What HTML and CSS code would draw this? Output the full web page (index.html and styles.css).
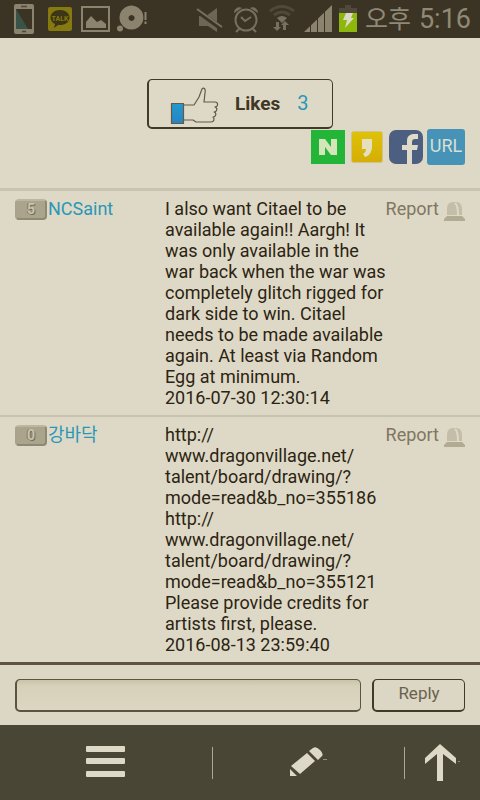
FILE: index.html
```html
<!DOCTYPE html>
<html lang="en">
<head>
<meta charset="utf-8">
<meta name="viewport" content="width=device-width, initial-scale=1">
<title>Comments</title>
<link rel="stylesheet" href="styles.css">
</head>
<body>
<header class="status">
  <svg class="status-icons" width="148" height="38" viewBox="0 0 148 38" aria-hidden="true">
    <rect x="14" y="4" width="20" height="30" rx="2" fill="#8b836e"/>
    <path d="M16 9h16v20H16z" fill="#3b3424"/><path d="M16 9l12 20H16z" fill="#395447"/>
    <path d="M21 6.500h6M22 31.500h4" stroke="#50493a" stroke-width="1.500"/>
    <rect x="48" y="7" width="24" height="24" rx="2" fill="#86790f"/>
    <path d="M60 10c-5.500 0-9.500 3.500-9.500 7.500 0 3 2 5.300 4.500 6.500l-1 4 4-3c6 .800 11.500-2.500 11.500-7.500 0-4-4-7.500-9.500-7.500z" fill="#3d3517"/>
    <text class="talk" x="60" y="21" text-anchor="middle">TALK</text>
    <rect x="82" y="7" width="27" height="24" fill="none" stroke="#8b836e" stroke-width="2"/>
    <path d="M86 28v-6l5-6 6 6 4-2 5 4v4z" fill="#8b836e"/>
    <path fill-rule="evenodd" d="M131.500 5.500a12 12 0 1 1-.1 0zM131.500 15a3 3 0 1 0 .1 0z" fill="#8b836e"/>
    <circle cx="120" cy="28.500" r="3" fill="#8b836e"/>
    <path d="M145.500 12v8M145.500 21.500v2.500" stroke="#8b836e" stroke-width="2"/>
  </svg>
  <div class="status-right">
  <svg class="status-icons" width="162" height="38" viewBox="195 0 162 38" aria-hidden="true">
    <path d="M198 16h7l11-8v24l-9-6h-9z" fill="#6d6655"/>
    <path d="M195 10l25 18" stroke="#3b3424" stroke-width="5"/><path d="M196 9l25 18" stroke="#777060" stroke-width="2"/>
    <g fill="none" stroke="#777060" stroke-width="2"><circle cx="245" cy="20" r="10.500"/><path d="M240 17l4 4 6-4M239 28l-4 4M251 28l4 4"/></g>
    <path d="M233 13c0-4 4-7 8-5zM257 13c0-4-4-7-8-5z" fill="#777060"/>
    <g fill="none" stroke="#50493a" stroke-width="3"><path d="M269 11q12-9 24 0M273 15q8-6 16 0" /></g><path d="M276 18q5-4 10 0l-5 5z" fill="#777060"/>
    <path d="M276 31l-4-4h3v-5h3v5h2zM284 21l4 4h-3v5h-3v-5h-2z" fill="#777060"/>
    <path d="M303 32l28-27v27z" fill="#8b836e"/><path d="M309.500 22v10M316.500 17v15M323.500 10v22" stroke="#3b3424" stroke-width="1"/>
    <path d="M338 13V8h6V5h6v3h6v5z" fill="#50493a"/><path d="M338 13h18v19h-18z" fill="#8db70b"/>
    <path d="M345 13h7l-2 5h3l-9 10 2-8h-4z" fill="#ded9c6"/>
  </svg>
  <span class="ampm">오후</span><time class="clock">5:16</time>
  </div>
</header>
<main class="page">
  <section class="actions">
    <button class="likes" type="button">
      <svg width="50" height="40" viewBox="0 0 50 40" aria-hidden="true">
        <defs><linearGradient id="cuff" x2="0" y2="1"><stop stop-color="#209bce"/><stop offset="1" stop-color="#2783c4"/></linearGradient></defs>
        <g stroke="#625a47" stroke-width="1.200" fill="none" stroke-linejoin="round">
          <rect x="1.500" y="17.500" width="12" height="20" fill="url(#cuff)"/>
          <path d="M14 19h10l5-8 3-8c2-2 4 0 3 4l-1 9h11c3 0 4 4 0 5 3 1 2 5-1 5 3 1 2 5-1 5 2 2 1 5-2 5H26l-3-2h-9"/>
        </g>
      </svg>
      <span class="likes-label">Likes</span><span class="likes-count">3</span>
    </button>
    <nav class="share" aria-label="Share">
      <a href="#" aria-label="Naver"><svg width="34" height="34" viewBox="0 0 34 34"><path d="M0 0h34v34H0z" fill="#23b538"/><path d="M8 9h6l6 8V9h6v16h-6l-6-8v8H8z" fill="#d4e6b9"/></svg></a>
      <a href="#" class="quote" aria-label="KakaoStory"><svg width="32" height="32" viewBox="0 0 32 32"><defs><linearGradient id="gold" x2="0" y2="1"><stop stop-color="#dec208"/><stop offset="1" stop-color="#d5ad06"/></linearGradient></defs><rect x=".5" y=".5" width="31" height="31" rx="2" fill="url(#gold)" stroke="#d0c489"/><path d="M11 8h10v8c0 5-3 9-7 10l-2-3c2-1 3-3 3-5h-4z" fill="#e3dfbf"/></svg></a>
      <a href="#" class="facebook" aria-label="Facebook"><svg width="34" height="34" viewBox="0 0 34 34"><rect width="34" height="34" rx="7" fill="#4d5f80"/><path d="M18 34V20h-5v-5h5v-4c0-5 3-7 7-7h4v5h-3c-2 0-3 1-3 3v3h6l-1 5h-5v14z" fill="#e0dac8"/></svg></a>
      <a href="#" class="url">URL</a>
    </nav>
  </section>
  <article class="comment">
    <div class="author"><span class="level">5</span><a href="#">NCSaint</a></div>
    <div class="text"><p>I also want Citael to be available again!! Aargh! It was only available in the war back when the war was completely glitch rigged for dark side to win. Citael needs to be made available again. At least via Random Egg at minimum.</p><time>2016-07-30 12:30:14</time></div>
    <a href="#" class="report">Report<svg width="21" height="21" viewBox="0 0 21 21" aria-hidden="true"><path d="M3 14V8q0-7 6-7h3q6 0 6 7v6z" fill="#c4bea8"/><path d="M11 2q3 2 3 12" stroke="#ded9c6" stroke-width="2" fill="none"/><path d="M3 15h15l3 3v2H0v-2z" fill="#b2ab94"/></svg></a>
  </article>
  <article class="comment">
    <div class="author"><span class="level">0</span><a href="#">강바닥</a></div>
    <div class="text"><p>http://<wbr>www.dragonvillage.net/<wbr>talent/board/drawing/?<wbr>mode=read&amp;b_no=355186 http://<wbr>www.dragonvillage.net/<wbr>talent/board/drawing/?<wbr>mode=read&amp;b_no=355121 Please provide credits for artists first, please.</p><time>2016-08-13 23:59:40</time></div>
    <a href="#" class="report">Report<svg width="21" height="21" viewBox="0 0 21 21" aria-hidden="true"><path d="M3 14V8q0-7 6-7h3q6 0 6 7v6z" fill="#c4bea8"/><path d="M11 2q3 2 3 12" stroke="#ded9c6" stroke-width="2" fill="none"/><path d="M3 15h15l3 3v2H0v-2z" fill="#b2ab94"/></svg></a>
  </article>
</main>
<form class="reply">
  <input type="text" aria-label="Reply text">
  <button type="button">Reply</button>
</form>
<nav class="bottom" aria-label="Tools">
  <button type="button" aria-label="Menu"><svg width="42" height="40" viewBox="0 0 42 40"><g fill="#ded9c6"><rect x="1" y="3" width="39" height="6" rx="1"/><rect x="1" y="15" width="39" height="6" rx="1"/><rect x="1" y="28" width="39" height="6" rx="1"/></g></svg></button>
  <button type="button" aria-label="Write"><svg width="40" height="40" viewBox="0 0 40 40"><g fill="#ded9c6"><path d="M1 33v-7l7 7zM2 23L18 10l8 8-15 13zM20 8l4-3q3-2 7 2t2 6l-4 4z"/><path d="M34 16h4v1h-4z" opacity=".5"/></g></svg></button>
  <button type="button" aria-label="Top"><svg width="40" height="42" viewBox="0 0 40 42"><path d="M20 2l16 14v6L23 12v27h-6V12L5 22v-6z" fill="#ded9c6"/><path d="M38 19h3v1h-3z" fill="#918c79"/></svg></button>
</nav>
</body>
</html>
```
FILE: styles.css
```css
* { box-sizing: border-box; }
body {
  margin: 0;
  min-height: 100vh;
  display: flex;
  flex-direction: column;
  background: #ded9c6;
  color: #2c2413;
  font: 18px/21px Roboto, "Noto Sans CJK KR", sans-serif;
}
a { color: inherit; text-decoration: none; }
button { font: inherit; cursor: pointer; }
svg { display: block; flex: none; }
.status {
  height: 38px;
  display: flex;
  justify-content: space-between;
  background: #3b3424;
  color: #918977;
}
.status-right { display: flex; align-items: center; padding-right: 9px; }
.ampm { margin-left: 7px; font: 400 25px/34px "Noto Sans CJK KR", sans-serif; height: 38px; }
.clock { margin-left: 8px; font-size: 27px; line-height: 38px; }
.talk { font: bold 7px Roboto, sans-serif; fill: #86790f; }
.page { flex: 1; border-bottom: 3px solid #5c5340; }
.actions { height: 150px; padding: 41px 15px 0; }
.likes {
  width: 186px;
  height: 50px;
  margin: 0 auto;
  padding: 0 21px;
  display: flex;
  align-items: center;
  border: 1px solid #403a28;
  border-left-width: 2px;
  border-bottom-width: 2px;
  border-radius: 5px;
  background: transparent;
  color: #403824;
}
.likes svg { margin-top: 4px; }
.likes-label { margin-left: 15px; font-size: 19px; font-weight: 700; }
.likes-count { margin-left: 17px; font-size: 20px; color: #2b97b8; }
.share { display: flex; justify-content: flex-end; align-items: center; gap: 5px; }
.facebook { margin-right: -1px; }
.quote { margin: 0 1px; }
.url {
  width: 38px;
  height: 36px;
  border-radius: 3px;
  background: #4693b7;
  color: #d8dfd3;
  font-size: 18px;
  line-height: 33px;
  text-align: center;
}
.comment {
  display: flex;
  padding: 7px 15px;
  border-top: 2px solid #c9c2af;
}
.actions + .comment { border-top-width: 3px; }
.author { width: 150px; flex: none; display: flex; gap: 1px; align-items: flex-start; color: #2b97b8; }
.level {
  width: 32px;
  height: 21px;
  margin-top: 1px;
  border: 2px solid;
  border-color: #bcb69f #8f8973 #8f8973 #a9a38c;
  border-radius: 4px;
  background: #aaa48d;
  color: #c9c3ad;
  font: bold 14px/17px Roboto, sans-serif;
  text-align: center;
  text-shadow: 1px 1px #746e5b, -1px 0 #7f7965;
}
.text { flex: 1; min-width: 0; margin-right: -5px; }
.text p { margin: 0; }
.text time { display: block; }
.report { display: flex; gap: 5px; align-items: flex-start; height: 22px; color: #807662; }
.report svg { margin-top: 3px; }
.reply { display: flex; gap: 11px; height: 60px; padding: 14px 15px; background: #dcd6c4; }
.reply input {
  flex: 1;
  min-width: 0;
  height: 33px;
  border: 1px solid #5c5340;
  border-left-width: 2px;
  border-bottom-width: 2px;
  border-radius: 5px;
  background: linear-gradient(#c9c4a7, #d7d1ba 20%, #dcd6c2);
  color: inherit;
  font: inherit;
}
.reply button {
  width: 93px;
  height: 33px;
  padding: 0 0 3px;
  border: 1px solid #3f3b2b;
  border-left-width: 2px;
  border-bottom-width: 2px;
  border-radius: 5px;
  background: transparent;
  color: #6b624e;
  font-size: 17px;
}
.bottom {
  height: 75px;
  display: grid;
  grid-template-columns: 213fr 192fr 75fr;
  align-items: center;
  background: #494636;
}
.bottom button {
  height: 32px;
  padding: 0;
  display: flex;
  align-items: center;
  justify-content: center;
  border: 0;
  border-right: 1px solid #b1a78d;
  background: transparent;
}
.bottom button:last-child { border-right: 0; padding-right: 5px; }
```
